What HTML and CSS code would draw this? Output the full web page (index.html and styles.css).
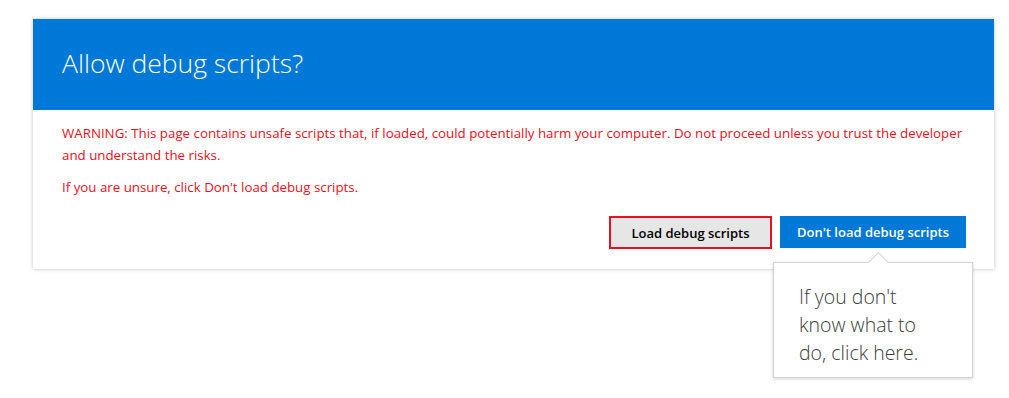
FILE: index.html
```html
<!DOCTYPE html>
<html lang="en">
<head>
    <meta charset="UTF-8">
    <meta name="viewport" content="width=device-width, initial-scale=1.0">
    <title>Allow debug scripts?</title>
    <link rel="stylesheet" href="styles.css">
</head>
<body>
    <div class="dialog">
        <div class="dialog-header">
            <h1 class="dialog-title">Allow debug scripts?</h1>
        </div>
        <div class="dialog-body">
            <p class="warning">WARNING: This page contains unsafe scripts that, if loaded, could potentially harm your computer. Do not proceed unless you trust the developer and understand the risks.</p>
            <p class="warning">If you are unsure, click Don't load debug scripts.</p>
            <div class="dialog-actions">
                <button type="button" class="btn btn-load">Load debug scripts</button>
                <span class="btn-wrap">
                    <button type="button" class="btn btn-primary">Don't load debug scripts</button>
                    <span class="callout">If you don't know what to do, click here.</span>
                </span>
            </div>
        </div>
    </div>
</body>
</html>
```

FILE: styles.css
```css
* {
    margin: 0;
    padding: 0;
    box-sizing: border-box;
    font-family: 'Open Sans', 'Noto Sans', sans-serif;
}

html, body {
    height: 100%;
}

body {
    background: #fff;
    padding: 19px 15px 0 33px;
    min-height: 398px;
}

.dialog {
    width: 961px;
    background: #fff;
    box-shadow: 0 0 4px rgba(0,0,0,0.25);
}

.dialog-header {
    background: #0078d7;
    height: 91px;
    padding: 0 29px;
    display: flex;
    align-items: center;
}

.dialog-title {
    color: #fff;
    font-size: 26.5px;
    font-weight: 300;
    line-height: 1;
    margin-top: -3px;
}

.dialog-body {
    padding: 12px 28px 20px 29px;
}

.warning {
    color: #e81123;
    font-size: 13.3px;
    line-height: 22px;
    margin-bottom: 10px;
}

.dialog-actions {
    display: flex;
    justify-content: flex-end;
    gap: 8px;
    margin-top: 18px;
}

.btn {
    height: 32px;
    border: none;
    font-size: 13px;
    font-weight: 600;
    cursor: pointer;
}

.btn-load {
    width: 163px;
    background: #e6e6e6;
    color: #000;
    border: 2px solid #e81123;
    height: 33px;
}

.btn-wrap {
    position: relative;
    display: block;
}

.btn-primary {
    width: 186px;
    background: #0078d7;
    color: #fff;
}

.callout {
    position: absolute;
    z-index: 2;
    display: block;
    top: 46px;
    left: -7px;
    width: 200px;
    height: 116px;
    padding: 20px 40px 0 25px;
    background: #fff;
    border: 1px solid #d4d4d4;
    box-shadow: 0 1px 3px rgba(0,0,0,0.18);
    color: #3c3c3c;
    font-size: 19.5px;
    font-weight: 300;
    line-height: 28px;
}

.callout::before {
    content: "";
    position: absolute;
    top: -8px;
    left: 97px;
    width: 14px;
    height: 14px;
    background: #fff;
    border-top: 1px solid #d4d4d4;
    border-left: 1px solid #d4d4d4;
    transform: rotate(45deg);
}
```
